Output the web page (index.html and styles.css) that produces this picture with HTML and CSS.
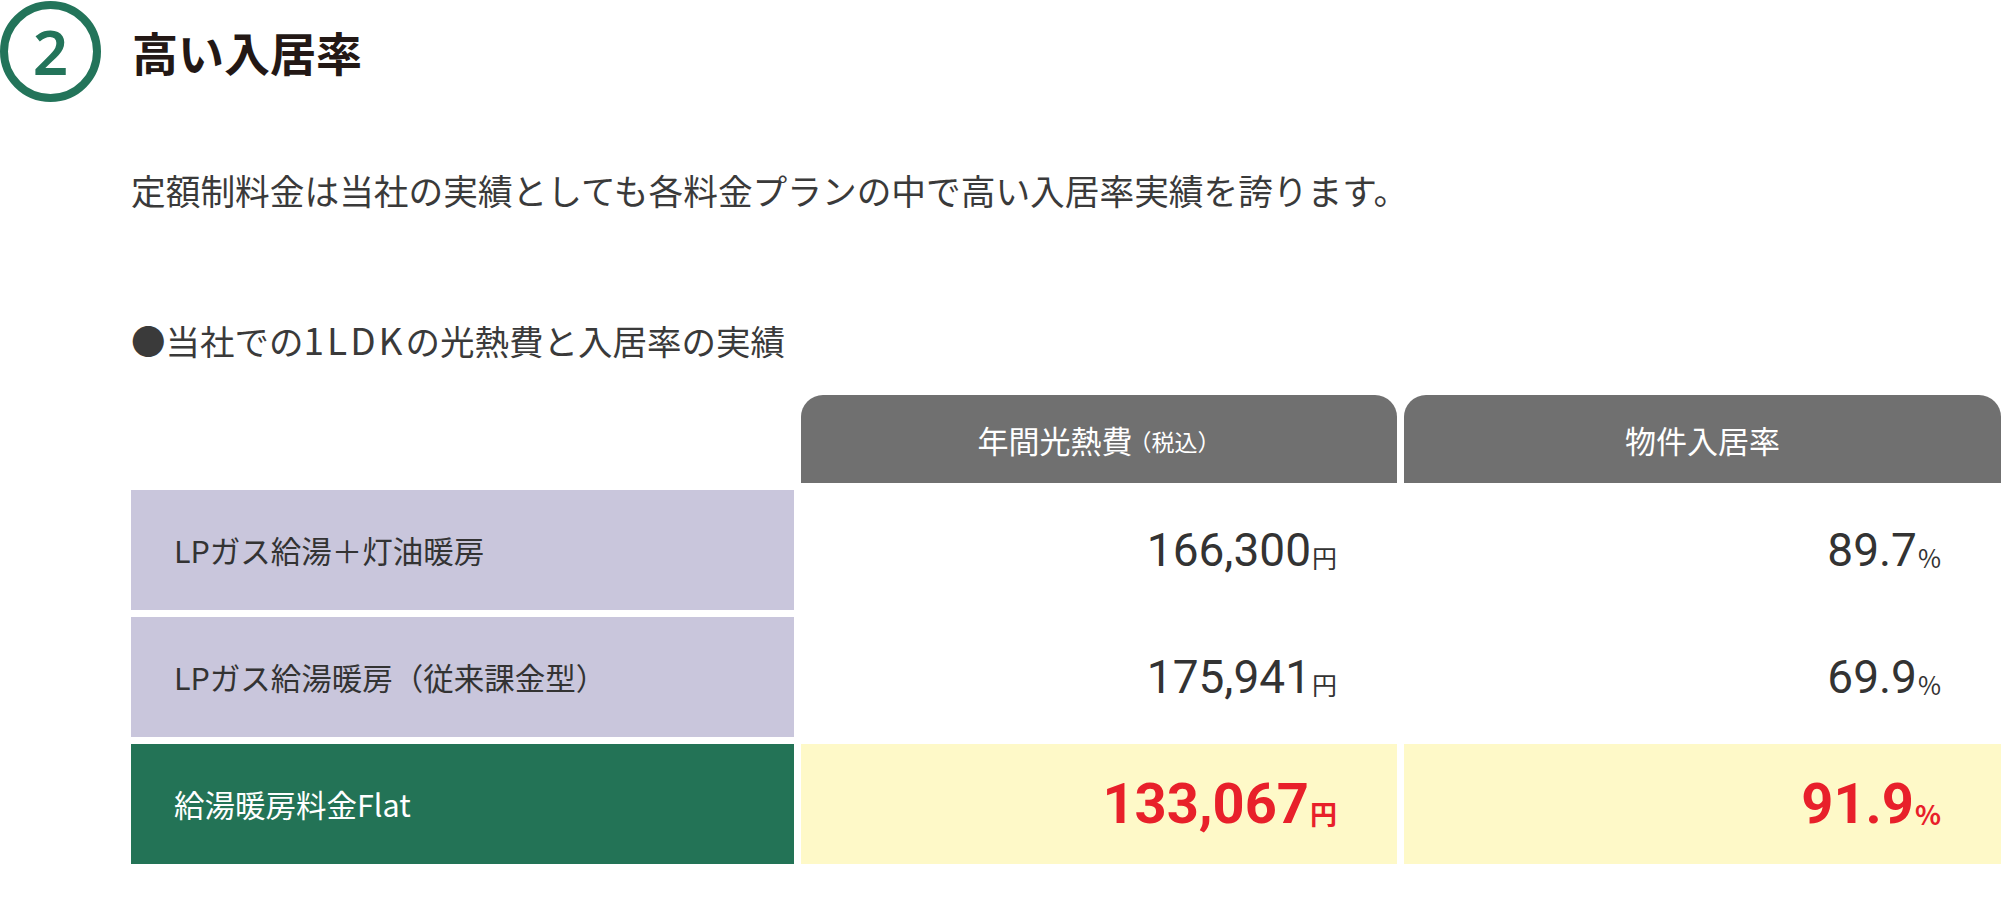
FILE: index.html
```html
<!DOCTYPE html>
<html lang="ja">
<head>
<meta charset="utf-8">
<link rel="stylesheet" href="styles.css">
</head>
<body>
<section class="section">
  <div class="heading">
    <div class="num-circle"><span>2</span></div>
    <h2 class="title">高い入居率</h2>
  </div>
  <p class="lead">定額制料金は当社の実績としても各料金プランの中で高い入居率実績を誇ります。</p>
  <p class="subhead">●当社での<span class="latin">1LDK</span>の光熱費と入居率の実績</p>
  <div class="table">
    <div class="blank"></div>
    <div class="th">年間光熱費<span class="small">（税込）</span></div>
    <div class="th">物件入居率</div>

    <div class="label">LPガス給湯＋灯油暖房</div>
    <div class="val"><span class="n">166,300</span><span class="u">円</span></div>
    <div class="val"><span class="n">89.7</span><span class="u">%</span></div>

    <div class="label">LPガス給湯暖房（従来課金型）</div>
    <div class="val"><span class="n">175,941</span><span class="u">円</span></div>
    <div class="val"><span class="n">69.9</span><span class="u">%</span></div>

    <div class="label label-hi">給湯暖房料金Flat</div>
    <div class="val val-hi"><span class="n">133,067</span><span class="u">円</span></div>
    <div class="val val-hi"><span class="n">91.9</span><span class="u">%</span></div>
  </div>
</section>
</body>
</html>
```

FILE: styles.css
```css
html, body {
  margin: 0;
  padding: 0;
  background: #ffffff;
}
body {
  font-family: "Noto Sans CJK JP", "Noto Sans", sans-serif;
  color: #333333;
}
.section {
  width: 2002px;
}
.heading {
  display: flex;
  align-items: center;
  height: 102px;
}
.num-circle {
  box-sizing: border-box;
  width: 101px;
  height: 101px;
  border: 8px solid #23745a;
  border-radius: 50%;
  display: flex;
  align-items: center;
  justify-content: center;
  margin-top: 1px;
}
.num-circle span {
  font-family: "Noto Sans", "Liberation Sans", sans-serif;
  font-weight: 600;
  font-size: 62px;
  line-height: 1;
  color: #23745a;
  margin-top: -2px;
}
.title {
  margin: 0 0 0 31px;
  font-size: 46px;
  font-weight: 700;
  color: #231815;
  line-height: 1;
}
.lead {
  margin: 68px 0 0 131px;
  font-size: 34.7px;
  line-height: 40px;
  color: #3a3a3a;
}
.subhead {
  margin: 109px 0 0 131px;
  font-size: 34.5px;
  line-height: 40px;
  color: #3a3a3a;
}
.subhead .latin {
  letter-spacing: 3px;
  font-size: 37px;
}
.table {
  display: grid;
  grid-template-columns: 663px 596px 597px;
  grid-template-rows: 88px 120px 120px 120px;
  column-gap: 7px;
  row-gap: 7px;
  margin: 35px 0 0 131px;
}
.th {
  background: #707070;
  color: #ffffff;
  border-radius: 22px 22px 0 0;
  display: flex;
  align-items: center;
  justify-content: center;
  font-size: 31px;
}
.th .small {
  font-size: 23px;
  margin-top: 3px;
  margin-left: -4px;
}
.label {
  background: #c9c6dc;
  display: flex;
  align-items: center;
  padding-left: 43px;
  font-size: 30.5px;
  color: #333333;
}
.label-hi {
  background: #237356;
  color: #ffffff;
}
.val {
  display: flex;
  align-items: center;
  justify-content: flex-end;
  padding-right: 60px;
  color: #333333;
}
.val .n {
  font-family: Roboto, "Noto Sans", sans-serif;
  font-size: 46px;
  line-height: 1;
}
.val .u {
  font-size: 25px;
  line-height: 1;
  margin-top: 14px;
  margin-left: 1px;
}
.val-hi {
  background: #fef9c8;
  color: #e8202a;
}
.val-hi .n {
  font-weight: 700;
  font-size: 56px;
}
.val-hi .u {
  font-weight: 700;
  font-size: 27px;
  margin-top: 18px;
}
```
